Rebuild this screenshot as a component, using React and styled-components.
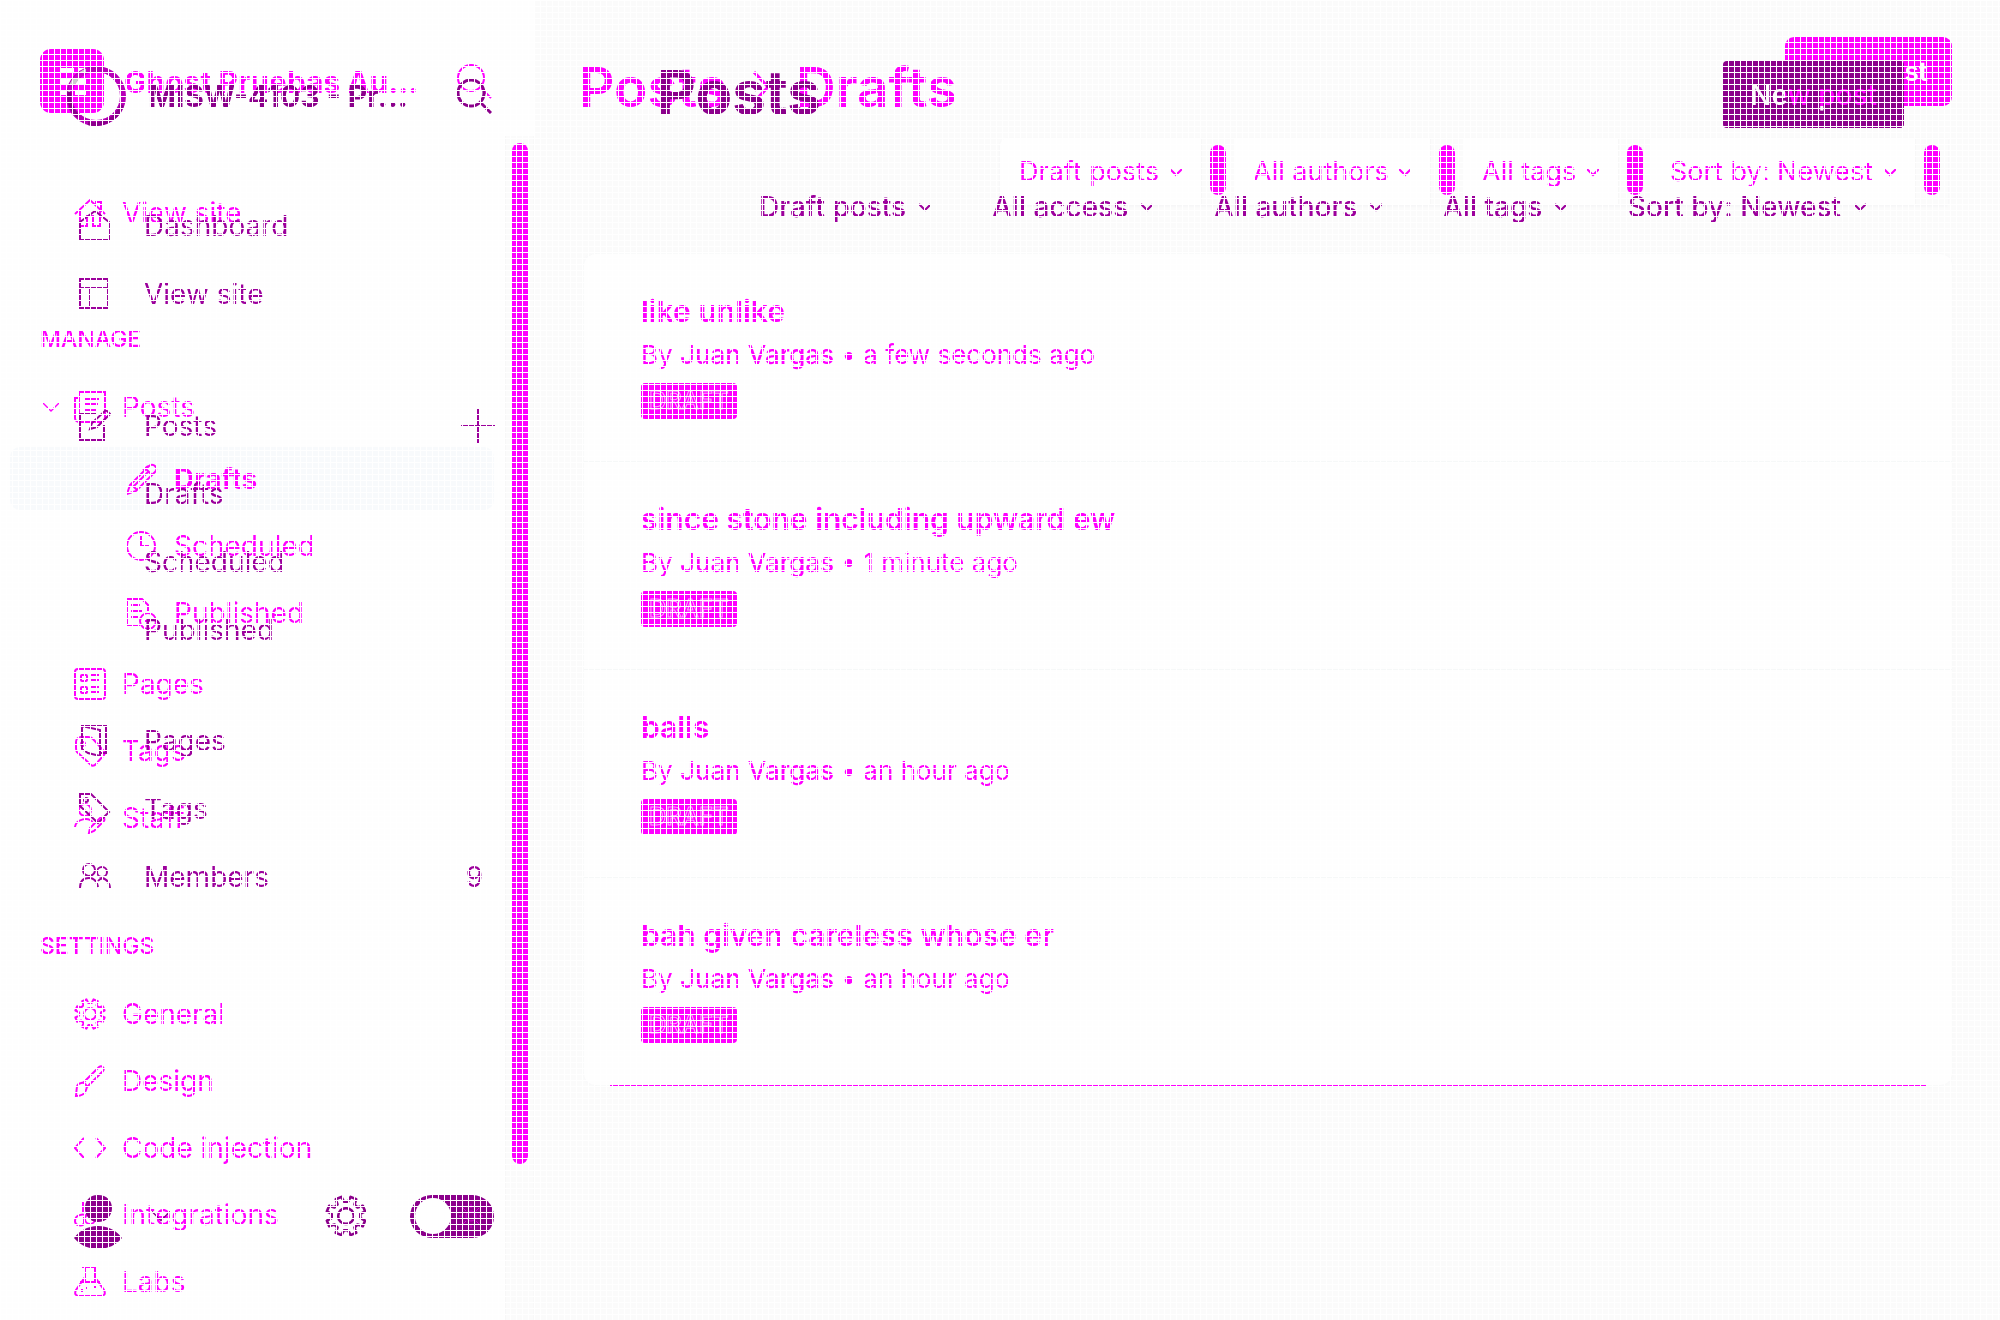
import React from 'react';
import styled, { createGlobalStyle } from 'styled-components';

const MAGENTA = '#ff00ff';
const PURPLE = '#8b008b';
const VIOLET = '#9c009c';
const CANVAS = '#fbfbfb';

const GlobalStyle = createGlobalStyle`
  *, *::before, *::after { box-sizing: border-box; }
  body {
    margin: 0;
    background: #fefefe;
    font-family: Inter, "Liberation Sans", sans-serif;
    -webkit-font-smoothing: antialiased;
  }
  a { color: inherit; text-decoration: none; }
  button, select, input { font: inherit; color: inherit; margin: 0; }
  svg { display: block; flex: none; }
`;

const Stage = styled.div`
  display: grid;
  min-height: 100vh;
  isolation: isolate;
  overflow: hidden;
  &::after {
    content: '';
    grid-area: 1 / 1;
    z-index: 3;
    pointer-events: none;
    background:
      repeating-linear-gradient(to right, #fff 0 1px, transparent 1px 6px),
      repeating-linear-gradient(to bottom, #fff 0 1px, transparent 1px 6px);
  }
`;

const Layer = styled.div`
  grid-area: 1 / 1;
  display: flex;
  min-width: 0;
  color: ${p => (p.$over ? VIOLET : MAGENTA)};
  mix-blend-mode: ${p => (p.$over ? 'darken' : 'normal')};
`;

/* ---------- sidebar ---------- */
const Sidebar = styled.aside`
  width: 505px;
  flex: none;
  display: flex;
  flex-direction: column;
  margin-right: ${p => (p.$over ? '30px' : '0')};
`;

const Track = styled.div`
  width: 30px;
  flex: none;
  margin-top: 136px;
  padding: 7px 7px 0 6px;
  background: ${CANVAS};
  border-left: 1px solid #f7f7f7;
  border-right: 2px solid #f8f8f8;
`;

const Thumb = styled.div`
  width: 16px;
  height: ${p => p.$height};
  border-radius: 8px;
  background: ${MAGENTA};
`;

const Brand = styled.header`
  display: flex;
  align-items: center;
  height: ${p => (p.$over ? '192px' : '162px')};
  padding: 0 13px 0 ${p => (p.$over ? '66px' : '40px')};
  gap: ${p => (p.$over ? '22px' : '20px')};
`;

const SiteName = styled.strong`
  flex: 1;
  font-size: 30px;
  font-weight: 700;
  line-height: 36px;
  padding-top: ${p => (p.$over ? '0' : '2px')};
  color: ${p => (p.$over ? PURPLE : MAGENTA)};
  white-space: nowrap;
`;

const IconButton = styled.button`
  padding: 0;
  border: 0;
  background: none;
  color: ${p => (p.$dark ? PURPLE : 'inherit')};
`;

const Nav = styled.nav`
  padding-top: ${p => (p.$over ? '0' : '17px')};
`;

const List = styled.ul`
  display: flex;
  flex-direction: column;
  list-style: none;
  margin: 0;
  padding: ${p => p.$before || '0'} 0 ${p => p.$after || '0'};
`;

const NavLink = styled.a`
  display: flex;
  align-items: center;
  gap: 16px;
  height: 67px;
  padding-left: 74px;
  font-size: 28px;
`;

const NavToggle = styled.button`
  display: flex;
  align-items: center;
  width: 100%;
  height: 67px;
  padding: 0 0 0 43px;
  border: 0;
  background: none;
  font-size: 28px;
  span { margin-left: 16px; }
  svg + svg { margin-left: 15px; }
`;

const SubItem = styled.li`
  padding: 2px 11px 2px 10px;
`;

const SubLink = styled.a`
  display: flex;
  align-items: center;
  gap: 16px;
  height: 63px;
  padding-left: 116px;
  border-radius: 10px;
  font-size: 28px;
  font-weight: ${p => (p.$active ? 700 : 400)};
  background: ${p => (p.$active ? '#f8fafc' : 'transparent')};
`;

const SectionTitle = styled.h2`
  margin: 0;
  padding-left: 40px;
  font-size: 23px;
  font-weight: 500;
  line-height: 67px;
  text-transform: uppercase;
`;

const OverRow = styled.div`
  display: flex;
  align-items: center;
  height: 68px;
  padding: 0 ${p => p.$end || '22px'} 0 ${p => (p.$indent ? '144px' : '79px')};
  font-size: 28px;
  a { display: flex; align-items: center; gap: 33px; flex: 1; }
`;

const UserBar = styled.div`
  display: flex;
  align-items: center;
  height: 68px;
  margin-top: 271px;
  padding: 0 11px 0 74px;
  button:first-child { display: flex; align-items: center; gap: 30px; margin-right: auto; }
`;

const Switch = styled.label`
  display: flex;
  align-items: center;
  justify-content: space-between;
  width: 84px;
  height: 43px;
  margin-left: 43px;
  padding: 0 11px 0 5px;
  border-radius: 22px;
  background: ${PURPLE};
  color: #d400d4;
  input {
    appearance: none;
    width: 36px;
    height: 36px;
    border-radius: 50%;
    background: #fff;
  }
`;

/* ---------- main column ---------- */
const Main = styled.main`
  flex: 1;
  min-width: 0;
  padding: ${p => (p.$over ? '61px 96px 0 122px' : '37px 48px 0 49px')};
  background: ${p => (p.$over ? 'transparent' : CANVAS)};
`;

const TitleBar = styled.header`
  display: flex;
  justify-content: space-between;
  align-items: flex-start;
  height: ${p => (p.$over ? '112px' : '101px')};
`;

const Title = styled.h1`
  display: flex;
  align-items: center;
  gap: 26px;
  margin: 0 0 0 ${p => (p.$over ? '0' : '-5px')};
  font-size: ${p => (p.$over ? '60px' : '55px')};
  font-weight: ${p => (p.$over ? 700 : 600)};
  line-height: ${p => (p.$over ? '62px' : '100px')};
  color: ${p => (p.$over ? PURPLE : MAGENTA)};
`;

const NewPost = styled.button`
  height: ${p => (p.$over ? '67px' : '69px')};
  padding: 0 ${p => (p.$over ? '27px' : '24px')};
  border: 0;
  border-radius: ${p => (p.$over ? '4px' : '9px')};
  background: ${p => (p.$over ? PURPLE : MAGENTA)};
  color: #fff;
  font-size: ${p => (p.$over ? '28px' : '26px')};
  font-weight: ${p => (p.$over ? 500 : 600)};
`;

const Filters = styled.div`
  display: flex;
  width: fit-content;
  height: 67px;
  margin: 0 4px 49px auto;
  background: ${CANVAS};
  border-radius: 8px 0 0 8px;
  box-shadow: 0 1px 3px #f3f3f5;
  overflow: hidden;
`;

const Field = styled.label`
  display: flex;
  align-items: center;
  gap: ${p => (p.$over ? '12px' : '10px')};
  padding: 0 ${p => (p.$over ? '0' : '19px')};
  background: ${p => (p.$over ? 'transparent' : '#fefefe')};
  font-size: ${p => (p.$over ? '28px' : '27px')};
  font-weight: ${p => (p.$over ? 500 : 400)};
  select {
    appearance: none;
    padding: 0;
    border: 0;
    background: none;
  }
`;

const FieldTrack = styled.div`
  padding: 7px 8px;
  border-left: 1px solid #f7f7f7;
`;

const OverFilters = styled.div`
  display: flex;
  justify-content: flex-end;
  gap: 61px;
  height: 67px;
  margin-right: 38px;
`;

const Posts = styled.ul`
  list-style: none;
  margin: 0;
  padding: 0;
  border-radius: 12px;
  background: #fefefe;
  box-shadow: 0 0 4px #f6f7f8;
`;

const Post = styled.li`
  padding: 36px 57px 42px;
  border-top: 1px solid #f6f8f8;
  &:first-child { border-top: 0; }
`;

const PostTitle = styled.h3`
  margin: 0;
  font-size: 30px;
  font-weight: 600;
  line-height: 42px;
`;

const Meta = styled.p`
  margin: 5px 0 10px;
  font-size: 26px;
  line-height: 36px;
  b { font-weight: 500; }
`;

const Badge = styled.span`
  display: block;
  width: fit-content;
  padding: 0 8px;
  border-radius: 4px;
  background: ${MAGENTA};
  color: ${MAGENTA};
  font-size: 24px;
  font-weight: 500;
  line-height: 36px;
  text-transform: uppercase;
  -webkit-text-stroke: 1px #ffa6ff;
`;

const ListEnd = styled.hr`
  height: 1px;
  margin: 0 26px;
  border: 0;
  background: ${MAGENTA};
`;

/* ---------- icons ---------- */
const gearPath = Array.from({ length: 8 }, (_, i) => {
  const point = (deg, r) => {
    const a = ((i * 45 + 22.5 + deg) * Math.PI) / 180;
    return `${(16 + r * Math.cos(a)).toFixed(1)} ${(16 + r * Math.sin(a)).toFixed(1)}`;
  };
  return `${point(-14, 11)}L${point(-9, 15)}L${point(9, 15)}L${point(14, 11)}`;
}).join('L');

const ICONS = {
  home: <path d="M1 17 16 3l15 14M6 14v15h7V19h6v10h7V14M22 8V5h5v8" />,
  posts: <path d="M5 1h26v25a5 5 0 0 1-5 5H5a4 4 0 0 1-4-4V7h4zM5 1v26M11 8h14M11 13h13M11 19h11" />,
  pencil: <path d="M1 31l3-9L23 3a4 4 0 0 1 6 6L10 28zM20 6l6 6M5 21l6 6M7 24 23 8M17 7l5-4" />,
  clock: <><circle cx="15" cy="16" r="14" /><path d="M15 6v10h8" /></>,
  published: <><path d="M14 28H1V2h15l6 6v6M5 8h9M5 14h11M5 20h8" /><circle cx="22" cy="24" r="8" /><path d="M19 24h6" /></>,
  pages: <><rect x="1" y="1" width="30" height="30" rx="3" /><rect x="7" y="7" width="6" height="6" rx="1" /><rect x="7" y="19" width="6" height="6" rx="1" /><path d="M17 7h8M17 12h8M17 19h8M17 24h8" /></>,
  tag: <><path d="M2 7a5 5 0 0 1 5-5h7c2 0 4 1 5 2l11 12c1 2 1 3 0 4L21 30c-2 1-3 1-4 0L3 17c-1-1-1-3-1-4z" /><circle cx="9" cy="9" r="2" /></>,
  staff: <><circle cx="11" cy="8" r="6" /><path d="M1 25c1-8 14-11 18-4M15 31l1-5L27 15c3-1 4 2 3 4L20 29z" /></>,
  gear: <><path d={`M${gearPath}z`} strokeLinejoin="round" /><circle cx="16" cy="16" r="6" /></>,
  brush: <path d="M2 31c1-9 0-12 5-13 4-1 7 3 5 7-1 4-5 6-10 6zM9 18 25 2c3-2 6 1 4 4L13 22" />,
  code: <path d="M10 6 1 16l9 10M22 6l9 10-9 10" />,
  integrations: <><path d="M9 13V3M13 17c-4-3-12-1-12 5 0 5 8 6 9 2V18M19 17c4-3 11-1 12 4" /><circle cx="16" cy="20" r="5" /></>,
  labs: <path d="M8 1h14M11 1v15M21 1v15M6 16h20M11 11 2 24c-2 4 0 6 3 6h22c3 0 5-2 3-6l-9-13M8 23v3M20 21h2M12 22h1" />,
  dashboard: <path d="M1 12 16 1l14 11v18H1z" />,
  site: <path d="M1 1h28v29H1zM1 10h28M11 10v20" />,
  compose: <path d="M17 4H1v26h24V15M11 19l2-6L27 0l4 4-13 13z" />,
  docs: <path d="M3 1h24v27h-5M3 1l18 4v26L9 28 3 24z" />,
  label: <><path d="M1 1h11l18 18-11 11L1 13z" /><circle cx="7" cy="7" r="2" /></>,
  members: <><circle cx="10" cy="9" r="6" /><circle cx="23" cy="11" r="5" /><path d="M1 27c0-6 3-10 9-10s8 4 9 9M19 20c4-5 11-2 12 7" /></>,
};

const Icon = ({ name, size = 32, weight = 2 }) => (
  <svg width={size} height={size} viewBox="0 0 32 32" fill="none" stroke="currentColor" strokeWidth={weight} aria-hidden="true">
    {ICONS[name]}
  </svg>
);

const Chevron = ({ width = 12, weight = 2 }) => (
  <svg width={width} height={width} viewBox="0 0 12 12" fill="none" stroke="currentColor" strokeWidth={weight} aria-hidden="true">
    <path d="M0 3 6 9l6-6" />
  </svg>
);

const Search = ({ weight }) => (
  <svg width="36" height="36" viewBox="0 0 36 36" fill="none" stroke="currentColor" strokeWidth={weight} aria-hidden="true">
    <circle cx="15" cy="15" r="13" />
    <path d="m24 24 11 11" />
  </svg>
);

const Dropdown = ({ text, label, over }) => (
  <Field $over={over}>
    <select aria-label={label}><option>{text}</option></select>
    <Chevron />
  </Field>
);

const SETTINGS = [
  ['gear', 'General'],
  ['brush', 'Design'],
  ['code', 'Code injection'],
  ['integrations', 'Integrations'],
  ['labs', 'Labs'],
];

const FILTERS = [
  ['Post type', 'Draft posts'],
  ['Author', 'All authors'],
  ['Tag', 'All tags'],
  ['Order', 'Sort by: Newest'],
];

const POSTS = [
  ['like unlike', 'a few seconds ago'],
  ['since stone including upward ew', '1 minute ago'],
  ['balls', 'an hour ago'],
  ['bah given careless whose er', 'an hour ago'],
];

const NavItem = ({ icon, children }) => (
  <li><NavLink href="#"><Icon name={icon} />{children}</NavLink></li>
);

const OverItem = ({ icon, children }) => (
  <li><OverRow $indent={!icon}><a href="#">{icon && <Icon name={icon} />}{children}</a></OverRow></li>
);

function BaseScreen() {
  return (
    <Layer>
      <Sidebar>
        <Brand>
          <svg width="64" height="64" viewBox="0 0 64 64" aria-hidden="true">
            <rect width="64" height="64" rx="11" fill={MAGENTA} />
            <path d="M20 19h14v5H20zM38 19h8v5h-8zM20 30h26v5H20zM20 41h10v5H20zM35 41h11v5H35z" fill="#fff" />
          </svg>
          <SiteName>Ghost Pruebas Au...</SiteName>
          <IconButton aria-label="Search"><Search weight="2" /></IconButton>
        </Brand>
        <Nav>
          <List $after="60px"><NavItem icon="home">View site</NavItem></List>
          <SectionTitle>Manage</SectionTitle>
          <List $after="62px">
            <li>
              <NavToggle><Chevron width={16} weight={1} /><Icon name="posts" /><span>Posts</span></NavToggle>
              <List $before="5px" $after="4px">
                <SubItem><SubLink href="#" $active><Icon name="pencil" />Drafts</SubLink></SubItem>
                <SubItem><SubLink href="#"><Icon name="clock" />Scheduled</SubLink></SubItem>
                <SubItem><SubLink href="#"><Icon name="published" />Published</SubLink></SubItem>
              </List>
            </li>
            <NavItem icon="pages">Pages</NavItem>
            <NavItem icon="tag">Tags</NavItem>
            <NavItem icon="staff">Staff</NavItem>
          </List>
          <SectionTitle>Settings</SectionTitle>
          <List>
            {SETTINGS.map(([icon, text]) => <NavItem key={text} icon={icon}>{text}</NavItem>)}
          </List>
        </Nav>
      </Sidebar>
      <Track><Thumb $height="1021px" /></Track>
      <Main>
        <TitleBar>
          <Title>
            Posts
            <svg width="17" height="32" viewBox="0 0 17 32" fill="none" stroke="currentColor" strokeWidth="3" aria-hidden="true"><path d="m1 1 14 15L1 31" /></svg>
            Drafts
          </Title>
          <NewPost>New post</NewPost>
        </TitleBar>
        <Filters>
          {FILTERS.map(([label, text]) => (
            <React.Fragment key={text}>
              <Dropdown label={label} text={text} />
              <FieldTrack><Thumb $height="50px" /></FieldTrack>
            </React.Fragment>
          ))}
        </Filters>
        <Posts>
          {POSTS.map(([title, time]) => (
            <Post key={title}>
              <PostTitle>{title}</PostTitle>
              <Meta>By <b>Juan Vargas</b> • {time}</Meta>
              <Badge>Draft</Badge>
            </Post>
          ))}
        </Posts>
        <ListEnd />
      </Main>
    </Layer>
  );
}

function OverScreen() {
  return (
    <Layer $over>
      <Sidebar $over>
        <Brand $over>
          <svg width="60" height="60" viewBox="0 0 60 60" fill="none" aria-hidden="true">
            <circle cx="30" cy="30" r="27" stroke="#b800b8" strokeWidth="6" />
            <path d="M12 50A27 27 0 0 1 5 20M22 57a28 28 0 0 0 34-18" stroke={PURPLE} strokeWidth="4" />
            <path d="M4 26A27 27 0 0 1 24 4" stroke="#cccccc" strokeWidth="5" />
          </svg>
          <SiteName $over>MISW-4103 - Pr...</SiteName>
          <IconButton $dark aria-label="Search"><Search weight="3" /></IconButton>
        </Brand>
        <Nav $over>
          <List $after="64px">
            <OverItem icon="dashboard">Dashboard</OverItem>
            <OverItem icon="site">View site</OverItem>
          </List>
          <List $after="43px">
            <li>
              <OverRow $end="10px">
                <a href="#"><Icon name="compose" />Posts</a>
                <IconButton aria-label="New post">
                  <svg width="34" height="34" viewBox="0 0 34 34" stroke="currentColor" strokeWidth="2" aria-hidden="true"><path d="M17 0v34M0 17h34" /></svg>
                </IconButton>
              </OverRow>
            </li>
            <OverItem>Drafts</OverItem>
            <OverItem>Scheduled</OverItem>
            <OverItem>Published</OverItem>
          </List>
          <List>
            <OverItem icon="docs">Pages</OverItem>
            <OverItem icon="label">Tags</OverItem>
            <li><OverRow><a href="#"><Icon name="members" />Members</a><span>9</span></OverRow></li>
          </List>
        </Nav>
        <UserBar>
          <IconButton $dark aria-label="Account">
            <svg width="48" height="66" viewBox="0 -12 48 66" fill="currentColor" aria-hidden="true">
              <path d="M24 0c9 0 14 6 14 13 0 8-6 14-14 14s-13-6-13-14C11 6 15 0 24 0zM0 43c5-7 13-12 24-12s19 5 24 12c-6 7-14 11-24 11S6 50 0 43z" />
            </svg>
            <Chevron width={18} weight={1} />
          </IconButton>
          <IconButton $dark aria-label="Settings"><Icon name="gear" size={42} /></IconButton>
          <Switch>
            <input type="checkbox" aria-label="Night mode" />
            <svg width="24" height="24" viewBox="0 0 24 24" fill="none" stroke="currentColor" strokeWidth="1" aria-hidden="true">
              <circle cx="12" cy="12" r="5" />
              <path d="M12 0v4M12 20v4M0 12h4M20 12h4M4 4l3 3M17 17l3 3M4 20l3-3M17 7l3-3" />
            </svg>
          </Switch>
        </UserBar>
      </Sidebar>
      <Main $over>
        <TitleBar $over>
          <Title $over>Posts</Title>
          <NewPost $over>New post</NewPost>
        </TitleBar>
        <OverFilters>
          {[FILTERS[0], ['Access', 'All access'], ...FILTERS.slice(1)].map(([label, text]) => (
            <Dropdown key={text} label={label} text={text} over />
          ))}
        </OverFilters>
      </Main>
    </Layer>
  );
}

export default function App() {
  return (
    <>
      <GlobalStyle />
      <Stage>
        <BaseScreen />
        <OverScreen />
      </Stage>
    </>
  );
}
